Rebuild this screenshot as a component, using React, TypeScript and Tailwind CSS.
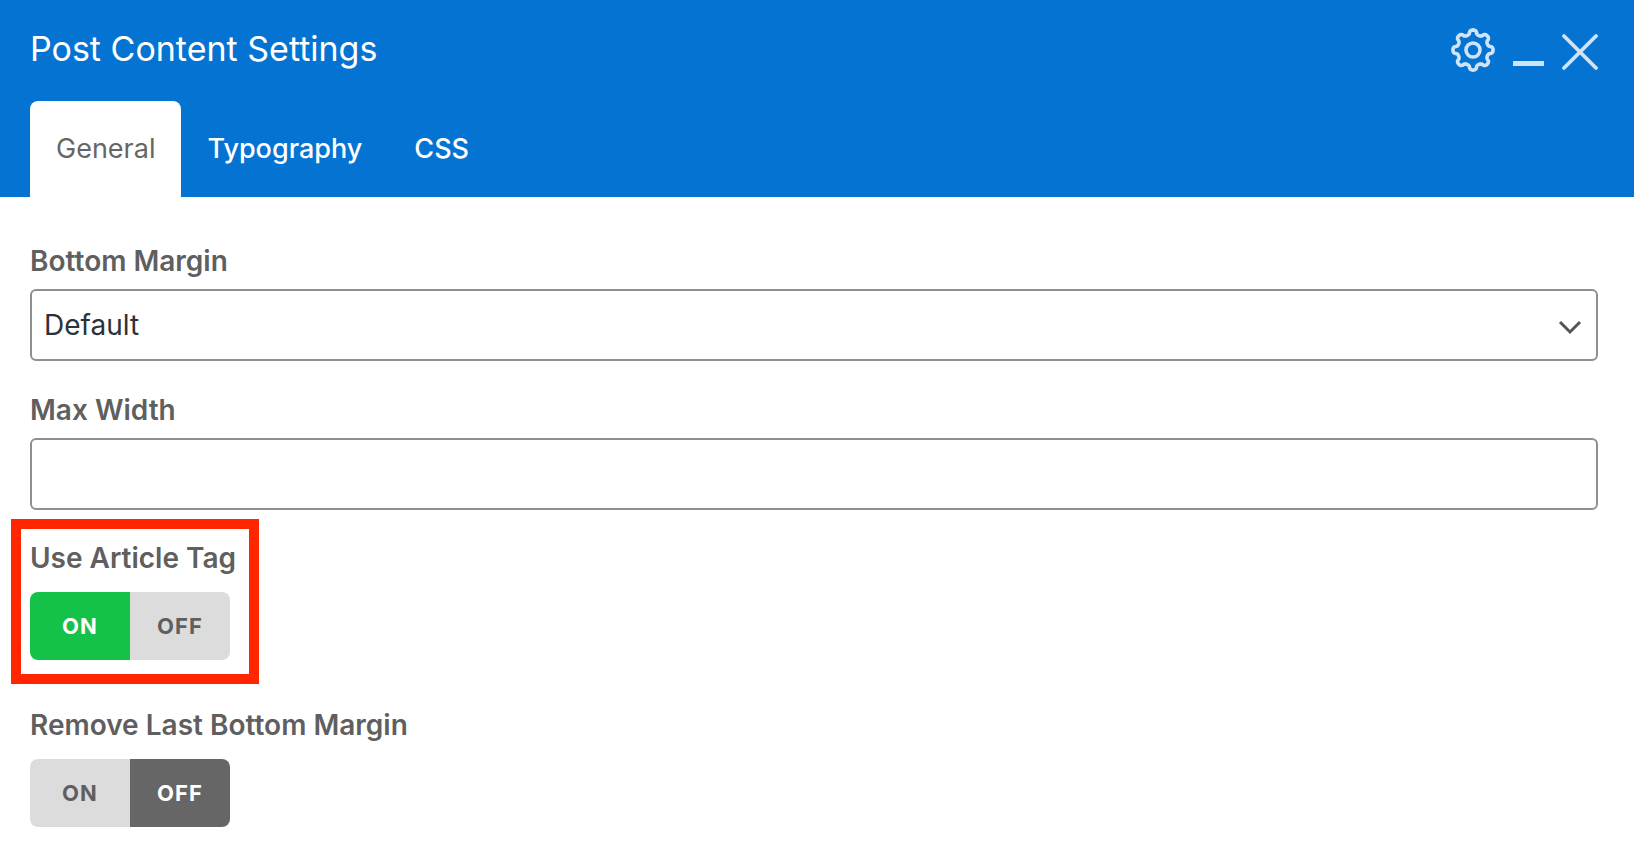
import { useState } from 'react';

const TABS = ['General', 'Typography', 'CSS'];

// Wavy gear outline with eight rounded teeth, centred on 0,0
const gearPath = (() => {
  const points: string[] = [];
  for (let deg = 0; deg < 360; deg += 3) {
    const angle = (deg * Math.PI) / 180;
    const radius = 17.8 + 2.3 * Math.cos(8 * angle);
    // shift points away from the valleys so that the teeth stay narrow
    const turn = angle + 0.04 * Math.sin(16 * angle);
    points.push(`${(radius * Math.cos(turn)).toFixed(2)} ${(radius * Math.sin(turn)).toFixed(2)}`);
  }
  return `M${points.join('L')}Z`;
})();

interface ToggleProps {
  name: string;
  label: string;
  value: boolean;
  highlighted?: boolean;
  onChange: (value: boolean) => void;
}

function Toggle({ name, label, value, highlighted, onChange }: ToggleProps) {
  return (
    <div role="radiogroup" aria-labelledby={`${name}-label`} className="relative w-fit">
      <div id={`${name}-label`} className="mb-4 text-[28px] leading-9 font-semibold text-[#5f5f5f]">
        {label}
      </div>
      <div className="flex w-[200px] h-[68px] rounded-lg overflow-hidden text-[22px] font-bold tracking-wider">
        <label
          className={`flex flex-1 items-center justify-center cursor-pointer ${
            value ? 'bg-[#14c24a] text-white' : 'bg-[#dcdcdc] text-[#5f5f5f]'
          }`}
        >
          <input type="radio" name={name} checked={value} onChange={() => onChange(true)} className="sr-only" />
          ON
        </label>
        <label
          className={`flex flex-1 items-center justify-center cursor-pointer ${
            value ? 'bg-[#dcdcdc] text-[#5f5f5f]' : 'bg-[#666666] text-white'
          }`}
        >
          <input type="radio" name={name} checked={!value} onChange={() => onChange(false)} className="sr-only" />
          OFF
        </label>
      </div>
      {highlighted && (
        <div className="absolute -left-[19px] -right-[23px] -top-[21px] -bottom-6 border-10 border-[#ff2600] pointer-events-none" />
      )}
    </div>
  );
}

function App() {
  const [activeTab, setActiveTab] = useState('General');
  const [bottomMargin, setBottomMargin] = useState('Default');
  const [maxWidth, setMaxWidth] = useState('');
  const [useArticleTag, setUseArticleTag] = useState(true);
  const [removeLastMargin, setRemoveLastMargin] = useState(false);

  return (
    <div className="min-h-screen bg-white font-['Inter',sans-serif]">
      {/* Header */}
      <header className="bg-[#0573d1] pt-[25px] pl-[30px] pr-9">
        <div className="flex items-center justify-between mb-7">
          <h1 className="text-[34px] leading-12 font-normal text-white">Post Content Settings</h1>
          <div className="flex items-center gap-4 text-[#cfe4f8]">
            <button type="button" aria-label="Settings">
              <svg width="46" height="46" viewBox="-23 -24 46 46" fill="none" stroke="currentColor" strokeWidth="3.6" strokeLinejoin="round">
                <path d={gearPath} />
                <circle r="7" />
              </svg>
            </button>
            <button type="button" aria-label="Minimize">
              <svg width="32" height="46" viewBox="0 0 32 46" fill="currentColor">
                <path d="M1 35h31v5H1z" />
              </svg>
            </button>
            <button type="button" aria-label="Close">
              <svg width="38" height="46" viewBox="0 0 38 46" fill="none" stroke="currentColor" strokeWidth="3.8" strokeLinecap="round">
                <path d="M4 10l32 32M36 10L4 42" />
              </svg>
            </button>
          </div>
        </div>
        <nav className="flex">
          {TABS.map((tab) => (
            <button
              key={tab}
              type="button"
              onClick={() => setActiveTab(tab)}
              className={`h-24 px-[26px] rounded-t-lg text-[27px] ${
                tab === activeTab ? 'bg-white text-[#666666]' : 'text-white font-medium'
              }`}
            >
              {tab}
            </button>
          ))}
        </nav>
      </header>

      {/* Fields */}
      <form className="pt-[46px] pb-8 pl-[30px] pr-9">
        <div className="mb-[31px]">
          <label htmlFor="bottom-margin" className="block mb-[10px] text-[28px] leading-9 font-semibold text-[#5f5f5f]">
            Bottom Margin
          </label>
          <div className="relative">
            <select
              id="bottom-margin"
              value={bottomMargin}
              onChange={(e) => setBottomMargin(e.target.value)}
              className="block w-full h-[72px] px-3 appearance-none border-2 border-[#8f8f8f] rounded-md bg-white text-[28px] text-[#2c3338] outline-none"
            >
              <option>Default</option>
              <option>None</option>
            </select>
            <svg
              className="absolute right-4 top-6 pointer-events-none"
              width="24"
              height="24"
              viewBox="0 0 24 24"
              fill="none"
              stroke="#555555"
              strokeWidth="3"
            >
              <path d="M2 9l10 10L22 9" />
            </svg>
          </div>
        </div>

        <div className="mb-[30px]">
          <label htmlFor="max-width" className="block mb-[10px] text-[28px] leading-9 font-semibold text-[#5f5f5f]">
            Max Width
          </label>
          <input
            id="max-width"
            type="text"
            value={maxWidth}
            onChange={(e) => setMaxWidth(e.target.value)}
            className="block w-full h-[72px] px-3 border-2 border-[#8f8f8f] rounded-md text-[28px] text-[#2c3338] outline-none"
          />
        </div>

        <div className="flex flex-col gap-[47px]">
          <Toggle
            name="use-article-tag"
            label="Use Article Tag"
            value={useArticleTag}
            highlighted
            onChange={setUseArticleTag}
          />
          <Toggle
            name="remove-last-margin"
            label="Remove Last Bottom Margin"
            value={removeLastMargin}
            onChange={setRemoveLastMargin}
          />
        </div>
      </form>
    </div>
  );
}

export default App;
